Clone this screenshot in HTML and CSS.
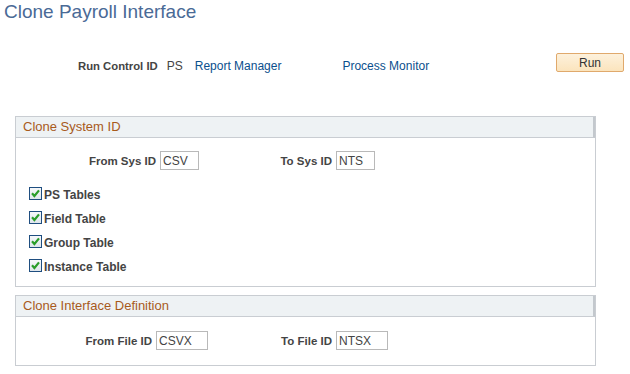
FILE: index.html
```html
<!DOCTYPE html>
<html lang="en">
<head>
    <meta charset="UTF-8">
    <title>Clone Payroll Interface</title>
    <link rel="stylesheet" href="styles.css">
</head>
<body>

    <h1 class="page-title">Clone Payroll Interface</h1>

    <div class="run-bar">
        <span class="label run-label">Run Control ID</span>
        <span class="value run-id">PS</span>
        <a href="#" class="link report-link">Report Manager</a>
        <a href="#" class="link monitor-link">Process Monitor</a>
        <button class="run-btn">Run</button>
    </div>

    <div class="group sys-group">
        <div class="group-head">Clone System ID</div>
        <div class="field-row">
            <label class="label cell-from">From Sys ID</label>
            <input class="text-in short" value="CSV">
            <label class="label cell-to">To Sys ID</label>
            <input class="text-in short" value="NTS">
        </div>
        <div class="check-list">
            <div class="check-row"><span class="check"><svg viewBox="0 0 13 13" width="13" height="13"><path d="M3 6.3 L5.4 9 L10 3.4" fill="none" stroke="#2a9d2a" stroke-width="2.2"/></svg></span><span class="label">PS Tables</span></div>
            <div class="check-row"><span class="check"><svg viewBox="0 0 13 13" width="13" height="13"><path d="M3 6.3 L5.4 9 L10 3.4" fill="none" stroke="#2a9d2a" stroke-width="2.2"/></svg></span><span class="label">Field Table</span></div>
            <div class="check-row"><span class="check"><svg viewBox="0 0 13 13" width="13" height="13"><path d="M3 6.3 L5.4 9 L10 3.4" fill="none" stroke="#2a9d2a" stroke-width="2.2"/></svg></span><span class="label">Group Table</span></div>
            <div class="check-row"><span class="check"><svg viewBox="0 0 13 13" width="13" height="13"><path d="M3 6.3 L5.4 9 L10 3.4" fill="none" stroke="#2a9d2a" stroke-width="2.2"/></svg></span><span class="label">Instance Table</span></div>
        </div>
    </div>

    <div class="group file-group">
        <div class="group-head">Clone Interface Definition</div>
        <div class="field-row">
            <label class="label cell-from">From File ID</label>
            <input class="text-in wide" value="CSVX">
            <label class="label cell-to">To File ID</label>
            <input class="text-in wide" value="NTSX">
        </div>
    </div>

</body>
</html>
```

FILE: styles.css
```css
body {
    margin: 0;
    font-family: "Liberation Sans", Arial, sans-serif;
    font-size: 12px;
    color: #444;
    background: #fff;
}
.page-title {
    margin: 0;
    padding: 1px 0 0 4px;
    font-size: 19px;
    line-height: 22px;
    font-weight: normal;
    color: #4a6a96;
}
.label {
    font-weight: bold;
    font-size: 11.5px;
    color: #444;
}
.run-bar {
    display: flex;
    align-items: flex-start;
    margin-top: 30px;
    padding-left: 78px;
    height: 20px;
}
.run-bar .label, .run-bar .value, .run-bar .link {
    line-height: 14px;
    margin-top: 6px;
}
.run-label {
    font-size: 11.3px;
}
.run-id {
    margin-left: 9px;
}
.link {
    color: #0b4f8d;
    text-decoration: none;
}
.report-link {
    margin-left: 12px;
}
.monitor-link {
    margin-left: 61px;
}
.run-btn {
    margin-left: auto;
    margin-right: 6px;
    width: 68px;
    height: 19px;
    padding: 2px 0 0;
    line-height: 15px;
    font-family: inherit;
    font-size: 12px;
    color: #333;
    background: linear-gradient(#fdf1dc, #fbe4bd);
    border: 1px solid #e0a96c;
    border-radius: 2px;
}
.group {
    margin-left: 15px;
    width: 579px;
    border: 1px solid #c9cdd2;
}
.sys-group {
    margin-top: 43px;
}
.file-group {
    margin-top: 8px;
    padding-bottom: 15px;
}
.group-head {
    height: 20px;
    line-height: 20px;
    padding-left: 7px;
    font-size: 13px;
    color: #a85a1c;
    background: #eef2f4;
    border-bottom: 1px solid #c9cdd2;
    border-right: 2px solid #c3c8cd;
}
.field-row {
    display: flex;
    align-items: center;
    height: 19px;
}
.sys-group .field-row {
    margin-top: 13px;
}
.file-group .field-row {
    margin-top: 14px;
}
.cell-from, .cell-to {
    text-align: right;
    margin-right: 4px;
}
.sys-group .cell-from { width: 140px; }
.sys-group .cell-to { width: 133px; }
.file-group .cell-from { width: 136px; }
.file-group .cell-to { width: 124px; }
.text-in {
    box-sizing: border-box;
    height: 19px;
    margin: 0;
    padding: 0 2px;
    font-family: inherit;
    font-size: 12px;
    color: #444;
    border: 1px solid #b9b9b9;
    outline: none;
}
.text-in.short { width: 39px; }
.text-in.wide { width: 52px; }
.check-list {
    margin-top: 12px;
    padding: 0 0 8px 13px;
}
.check-row {
    display: flex;
    align-items: flex-start;
    height: 24px;
}
.check {
    box-sizing: border-box;
    width: 13px;
    height: 13px;
    margin-top: 5px;
    margin-right: 2px;
    border: 1px solid #1f4e80;
    background: linear-gradient(#f6f8fa, #dfe6ec);
    display: flex;
}
.check svg {
    margin: -1px;
}
.check-row .label {
    font-size: 12px;
    line-height: 13px;
    margin-top: 7px;
}
```
